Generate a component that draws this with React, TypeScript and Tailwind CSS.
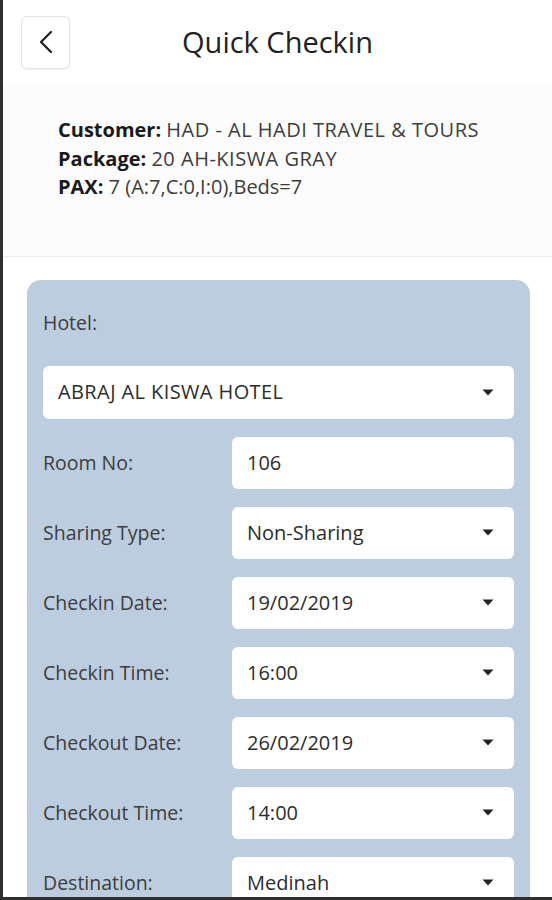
import React from "react";

const Caret = () => (
  <svg width="12" height="7" viewBox="0 0 12 7" className="shrink-0">
    <path d="M0.5 0.5 L11.5 0.5 L6 6.5 Z" fill="#222" />
  </svg>
);

const Row = ({ label, value, select = true }: { label: string; value: string; select?: boolean }) => (
  <div className="flex items-center">
    <div className="w-[189px] shrink-0 text-[19.5px] text-[#3d3d3d]">{label}</div>
    <div className="flex-1 h-[52px] bg-white rounded-[6px] flex items-center justify-between pl-[15px] pr-[20px] text-[20px] text-[#2d2d2d]">
      <span>{value}</span>
      {select && <Caret />}
    </div>
  </div>
);

export default function App() {
  return (
    <div className="w-[552px] h-[900px] overflow-hidden bg-white border-l-[3px] border-b-[3px] border-[#2f2f2f] font-['Open_Sans',sans-serif] text-[#2d2d2d]">
      <div className="h-[84px] grid grid-cols-[1fr_auto_1fr] items-center">
        <div className="pl-[18px]">
          <div className="w-[49px] h-[53px] rounded-[6px] border border-[#e3e3e3] shadow-[0_1px_2px_rgba(0,0,0,0.06)] flex items-center justify-center bg-white">
            <svg width="14" height="24" viewBox="0 0 14 24">
              <path d="M12 2 L2 12 L12 22" fill="none" stroke="#1e1e1e" strokeWidth="2.2" strokeLinecap="round" strokeLinejoin="round" />
            </svg>
          </div>
        </div>
        <div className="text-[29px] text-[#222]">Quick Checkin</div>
        <div />
      </div>
      <div className="bg-[#fcfcfc] border-b border-[#ececec] pt-[32px] pb-[54px] pl-[55px] text-[20px] leading-[28.5px] text-[#3d3d3d]">
        <div><span className="font-bold text-[#1a1a1a]">Customer:</span> <span className="tracking-[0.5px]">HAD - AL HADI TRAVEL &amp; TOURS</span></div>
        <div><span className="font-bold text-[#1a1a1a]">Package:</span> <span className="tracking-[0.5px]">20 AH-KISWA GRAY</span></div>
        <div><span className="font-bold text-[#1a1a1a]">PAX:</span> 7 (A:7,C:0,I:0),Beds=7</div>
      </div>
      <div className="mt-[23px] ml-[24px] w-[503px] bg-[#bccddf] rounded-[14px] pt-[29px] pb-[30px] px-[16px]">
        <div className="text-[19.5px] leading-[28px] text-[#3d3d3d]">Hotel:</div>
        <div className="mt-[29px] h-[53px] bg-white rounded-[6px] flex items-center justify-between pl-[15px] pr-[20px] text-[20px] text-[#2d2d2d]">
          <span className="tracking-[0.4px]">ABRAJ AL KISWA HOTEL</span>
          <Caret />
        </div>
        <div className="mt-[18px] flex flex-col gap-[18px]">
          <Row label="Room No:" value="106" select={false} />
          <Row label="Sharing Type:" value="Non-Sharing" />
          <Row label="Checkin Date:" value="19/02/2019" />
          <Row label="Checkin Time:" value="16:00" />
          <Row label="Checkout Date:" value="26/02/2019" />
          <Row label="Checkout Time:" value="14:00" />
          <Row label="Destination:" value="Medinah" />
        </div>
      </div>
    </div>
  );
}
